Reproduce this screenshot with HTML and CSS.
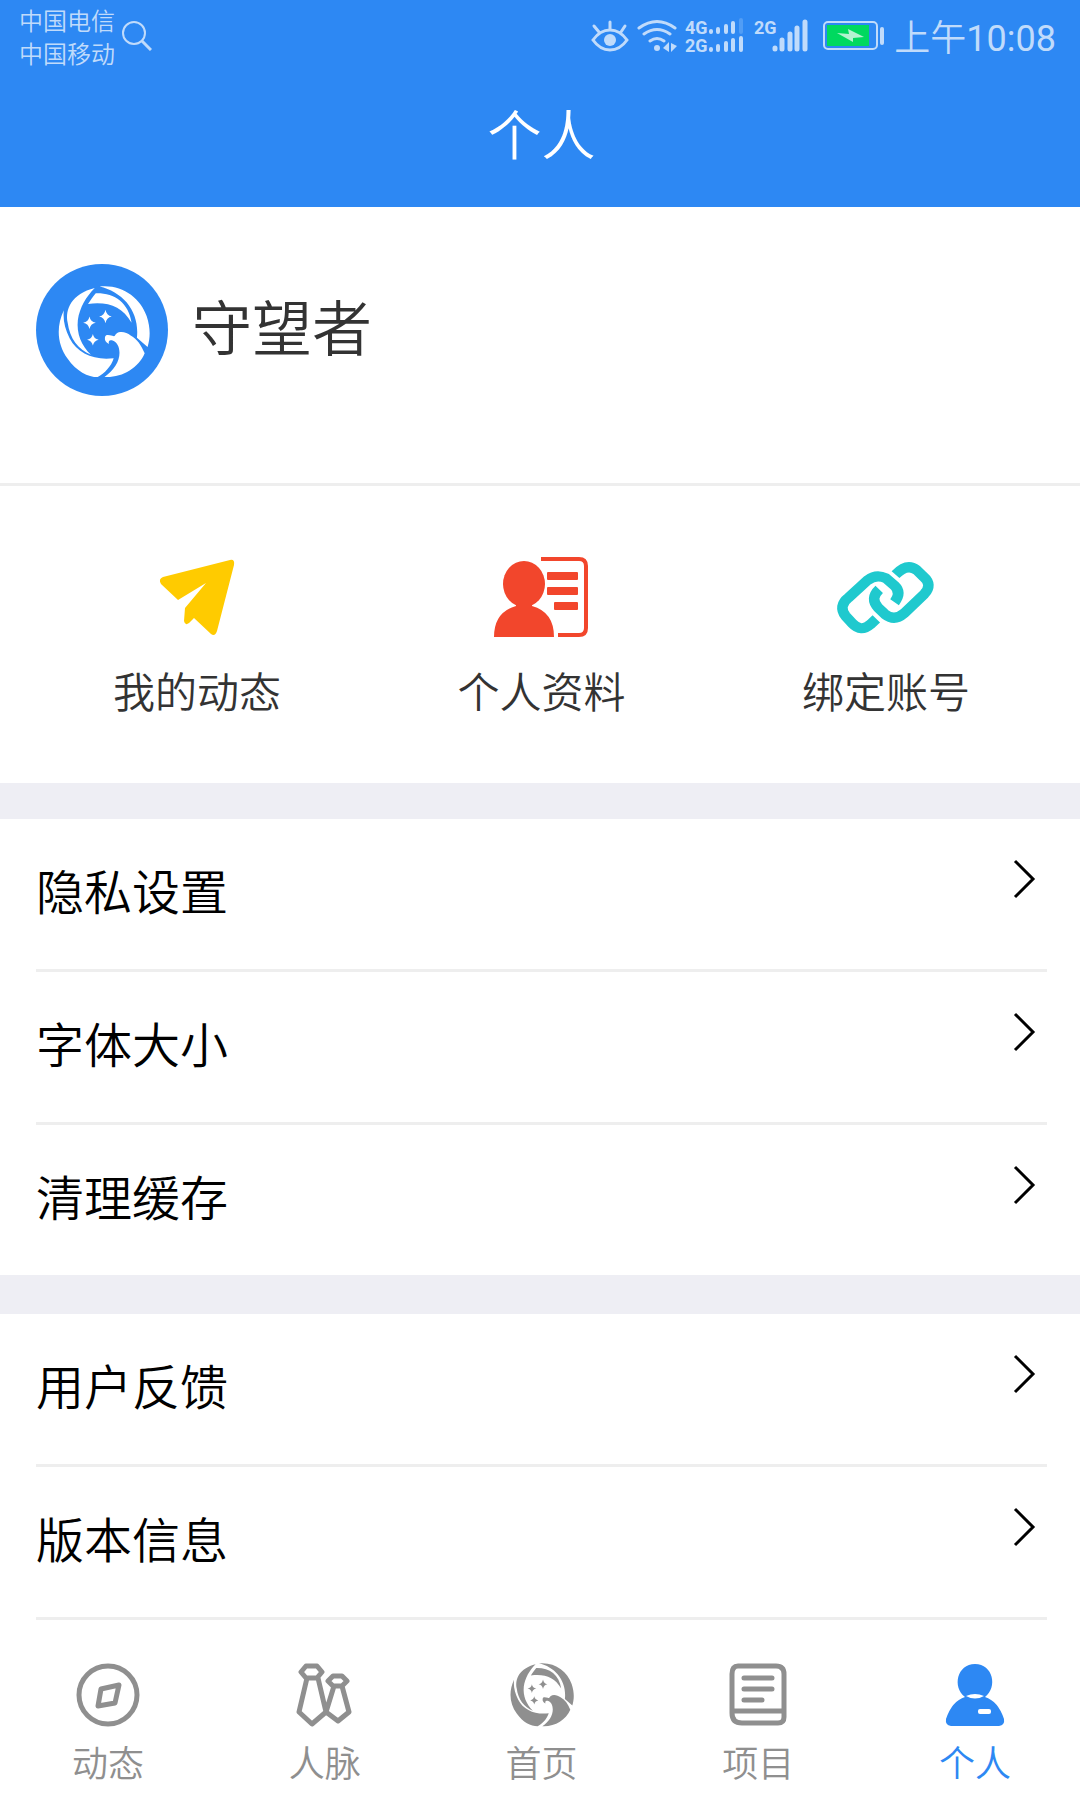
FILE: index.html
```html
<!DOCTYPE html>
<html lang="zh-CN">
<head>
<meta charset="utf-8">
<meta name="viewport" content="width=device-width, initial-scale=1">
<title>个人</title>
<link rel="stylesheet" href="styles.css">
</head>
<body>
<svg class="defs" aria-hidden="true">
  <symbol id="eagle" viewBox="0 0 190 190">
    <path d="M76 4C28 16 14 48 20 76C24 108 42 132 68 142C48 122 38 98 41 70C45 44 58 22 76 4Z"/>
    <path d="M12 50C-4 84 -2 120 20 150C38 176 62 188 82 188C96 180 110 166 115 149C76 154 40 140 24 108C14 88 10 70 12 50Z"/>
    <path d="M86 1C132 -4 170 24 183 62C191 86 191 106 185 126L163 107C166 78 158 54 142 34C128 18 108 6 86 1Z"/>
    <path d="M62 37C68 28 72 22 78 15C116 14 146 34 152 76C132 42 104 32 62 37Z"/>
    <path d="M97 106C98 100 104 101 112 103C119 105 116 102 121 98C128 92 142 95 150 102C164 110 172 122 179 139C166 170 132 190 96 188C116 174 127 156 127 138C127 126 122 116 114 113C106 111 104 113 105 120C98 116 96 112 97 106Z"/>
    <path d="M65 63Q67 74 78 76Q67 78 65 89Q63 78 52 76Q63 74 65 63ZM98 49Q100 61 111 63Q100 65 98 77Q96 65 85 63Q96 61 98 49ZM72 99Q74 109 84 111Q74 113 72 123Q70 113 60 111Q70 109 72 99Z"/>
    <path class="eye" d="M131 112L142 115Q140 120 136 118Z"/>
  </symbol>
  <symbol id="chevron" viewBox="0 0 24 40">
    <path d="M2 2L20 20L2 38" fill="none" stroke="currentColor" stroke-width="3"/>
  </symbol>
</svg>

<header class="header">
  <div class="status">
    <div class="carriers"><span>中国电信</span><span>中国移动</span></div>
    <svg class="search" width="30" height="30" viewBox="0 0 30 30"><g fill="none" stroke="currentColor"><circle cx="12" cy="12" r="11" stroke-width="2"/><path d="M20 20L29 29" stroke-width="3"/></g></svg>
    <svg class="signals" width="222" height="40" viewBox="0 0 222 40">
      <g fill="none" stroke="currentColor" stroke-width="3" stroke-linecap="round">
        <path d="M2 24Q9 14 19 14Q29 14 36 24Q29 34 19 34Q9 34 2 24ZM19 6V13M3 10L8 16M34 10L30 16"/>
        <path d="M48 12Q66 -1 84 12M53 18Q66 9 79 18M59 25Q66 20 73 25"/>
        <path d="M184 33V32M191 33V24M199 33V18M206 33V12M214 33V6" stroke-width="5"/>
        <path d="M120 16V15M127 16V13M135 16V10M142 16V7M120 34V33M127 34V30M135 34V27M142 34V24M150 34V22" stroke-width="4"/>
        <path d="M150 16V4" stroke-width="4" opacity=".25"/>
      </g>
      <g fill="currentColor"><circle cx="19" cy="24" r="6"/><circle cx="66" cy="32" r="3"/><path d="M78 26V36L72 32ZM80 27L86 30L80 36Z"/></g>
      <g class="network"><text x="94" y="18">4G</text><text x="94" y="36">2G</text><text x="163" y="18">2G</text></g>
    </svg>
    <svg class="battery" width="62" height="30" viewBox="0 0 62 30"><rect x="1" y="1" width="53" height="27" rx="4" fill="none" stroke="currentColor" stroke-width="2"/><rect x="4" y="4" width="42" height="21" fill="#00d95f"/><path d="M14 12L26 13L25 8L41 16L30 17V21Z" fill="#b3f3d0"/><rect x="57" y="6" width="4" height="18" rx="2" fill="currentColor"/></svg>
    <time class="clock">上午<span class="digits">10:08</span></time>
  </div>
  <h1 class="title">个人</h1>
</header>

<main>
  <section class="profile">
    <div class="avatar"><svg width="92" height="92"><use href="#eagle"/></svg></div>
    <h2 class="name">守望者</h2>
  </section>

  <nav class="actions">
    <a class="action" href="#feed">
      <svg width="100" height="84" viewBox="0 0 100 84"><path fill="#ffcb00" d="M16 30Q11 32 14 37L31 53L59 36L38 61L37 74Q38 79 42 76L47 71L64 87Q68 90 70 84L87 18Q88 12 83 13Z" transform="translate(0 -8)"/></svg>
      我的动态
    </a>
    <a class="action" href="#info">
      <svg width="100" height="84" viewBox="0 0 100 84"><g fill="#f2462c"><ellipse cx="33" cy="29" rx="21" ry="23"/><path d="M25 47H41V51Q63 57 63 82H3Q3 57 25 51Z"/><rect x="56" y="17" width="31" height="8" rx="1"/><rect x="56" y="32" width="31" height="8" rx="1"/><rect x="63" y="47" width="24" height="8" rx="1"/></g><path d="M50 4H88Q95 4 95 11V73Q95 80 88 80H67" fill="none" stroke="#f2462c" stroke-width="4"/></svg>
      个人资料
    </a>
    <a class="action" href="#bind">
      <svg width="100" height="84" viewBox="0 0 100 84"><g fill="none" stroke="#1fc9ce" stroke-width="11" transform="matrix(.96 0 0 .92 0 4)"><path d="M61 47C66 40 66 34 61 29L52 21Q42 16 33 23L13 42Q2 51 10 62L17 70Q26 80 36 71L42 65"/><path d="M62 17Q74 4 84 12L91 19Q101 28 92 38L71 59Q61 68 51 60L44 53Q35 43 45 33"/></g></svg>
      绑定账号
    </a>
  </nav>

  <ul class="group">
    <li><a class="row" href="#privacy">隐私设置<svg class="chevron"><use href="#chevron"/></svg></a></li>
    <li><a class="row" href="#font">字体大小<svg class="chevron"><use href="#chevron"/></svg></a></li>
    <li><a class="row" href="#cache">清理缓存<svg class="chevron"><use href="#chevron"/></svg></a></li>
  </ul>
  <ul class="group">
    <li><a class="row" href="#feedback">用户反馈<svg class="chevron"><use href="#chevron"/></svg></a></li>
    <li><a class="row" href="#version">版本信息<svg class="chevron"><use href="#chevron"/></svg></a></li>
  </ul>
</main>

<nav class="tabs">
  <a class="tab" href="#t1"><svg width="64" height="64" viewBox="0 0 64 64"><g fill="none" stroke="currentColor"><circle cx="32" cy="32" r="29" stroke-width="5"/><path d="M25 26L43 22L39 40L22 43Z" stroke-width="5" stroke-linejoin="round"/></g></svg>动态</a>
  <a class="tab" href="#t2"><svg width="64" height="64" viewBox="0 0 64 64"><g fill="none" stroke="currentColor" stroke-width="5" stroke-linejoin="round"><path d="M13 3H24L29 9L24 15H13L8 9ZM14 15L6 49L19 61L33 49L25 15M40 13H49L54 18L49 23H40L35 18ZM41 23L33 49L45 58L56 49L49 23"/></g></svg>人脉</a>
  <a class="tab" href="#t3"><svg width="64" height="64"><use href="#eagle"/></svg>首页</a>
  <a class="tab" href="#t4"><svg width="64" height="64" viewBox="0 0 64 64"><path d="M12 3H50Q58 3 58 11V54Q58 60 52 60H16Q6 60 6 50V11Q6 3 12 3ZM6 48H58M18 15H46M18 26H46M18 37H36" fill="none" stroke="currentColor" stroke-width="5" stroke-linecap="round"/></svg>项目</a>
  <a class="tab active" href="#t5" aria-current="page"><svg width="64" height="64" viewBox="0 0 64 64"><g fill="currentColor"><path d="M22 34C9 24 14 1 32 1S55 24 42 34Q55 38 61 56Q62 62 56 63H8Q2 62 3 56Q9 38 22 34Z"/></g><path d="M23 33Q32 29 41 33Q32 38 23 33Z" fill="#fff"/><rect x="35" y="46" width="13" height="5" rx="2" fill="#fff"/></svg>个人</a>
</nav>
</body>
</html>
```
FILE: styles.css
```css
* { box-sizing: border-box; }

body {
  margin: 0;
  min-height: 100vh;
  display: flex;
  flex-direction: column;
  background: #fff;
  color: #333;
  font-family: "Noto Sans CJK SC", sans-serif;
  font-weight: 350;
}

h1, h2, ul { margin: 0; padding: 0; font-weight: inherit; }
ul { list-style: none; }
a { color: inherit; text-decoration: none; }
svg { flex: none; display: block; }
.defs { position: absolute; width: 0; height: 0; }
#eagle { fill: currentColor; }

.header { height: 207px; background: #2d88f3; color: #fff; }
.status {
  display: flex;
  align-items: center;
  height: 72px;
  padding: 0 24px 0 19px;
  color: #c0dbfb;
}
.carriers { display: flex; flex-direction: column; font-size: 24px; line-height: 33px; }
.search { margin-left: 7px; }
.signals { margin-left: auto; }
.network { fill: currentColor; font: bold 18px "Liberation Sans Narrow", "Roboto", sans-serif; }
.battery { margin-left: 10px; }
.clock { margin-left: 9px; font-size: 36px; line-height: 72px; padding-top: 2px; }
.digits { font-family: "Roboto", sans-serif; font-weight: 400; }
.title { padding-left: 3px; font-size: 54px; line-height: 122px; text-align: center; }

.profile {
  display: flex;
  align-items: center;
  gap: 24px;
  height: 279px;
  padding: 0 36px 31px;
  border-bottom: 3px solid #eee;
}
.avatar {
  display: grid;
  place-items: center;
  width: 132px;
  height: 132px;
  border-radius: 50%;
  background: #2d88f3;
  color: #fff;
  padding: 4px 0 0 4px;
}
.avatar .eye { fill: #2d88f3; }
.name { padding-bottom: 10px; font-size: 60px; line-height: 80px; }

.actions { display: flex; justify-content: space-between; padding: 69px 110px 60px 113px; }
.action {
  display: flex;
  flex-direction: column;
  align-items: center;
  gap: 18px;
  font-size: 42px;
  line-height: 66px;
}

.group { border-top: 36px solid #eeeef4; background: #fff; color: #000; }
.group + .group { border-top-width: 39px; }
.group li { padding: 0 33px 0 36px; }
.row {
  display: flex;
  justify-content: space-between;
  height: 150px;
  padding: 34px 10px 0 0;
  font-size: 48px;
  line-height: 72px;
}
.group li:not(:last-child)::after,
.group + .group li::after { content: ""; display: block; height: 3px; background: #eee; }
.chevron { width: 24px; height: 40px; margin-top: 6px; }

.tabs {
  display: flex;
  justify-content: space-between;
  margin-top: auto;
  height: 180px;
  padding: 43px 33px 0 36px;
  background: #fff;
  color: #8f8f8f;
}
.tab {
  width: 144px;
  display: flex;
  flex-direction: column;
  align-items: center;
  gap: 10px;
  font-size: 36px;
  line-height: 48px;
}
.tab.active { color: #2d88f3; }
```
